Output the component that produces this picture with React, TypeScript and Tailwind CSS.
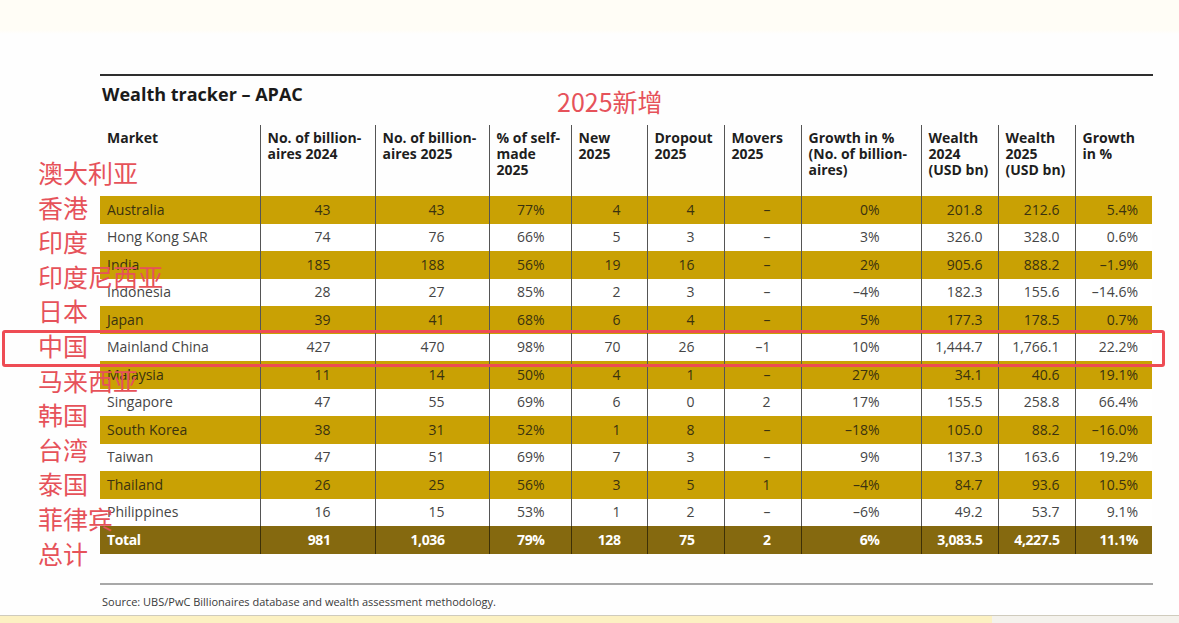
const rows: [string, ...string[]][] = [
  ['Australia', '43', '43', '77%', '4', '4', '–', '0%', '201.8', '212.6', '5.4%'],
  ['Hong Kong SAR', '74', '76', '66%', '5', '3', '–', '3%', '326.0', '328.0', '0.6%'],
  ['India', '185', '188', '56%', '19', '16', '–', '2%', '905.6', '888.2', '–1.9%'],
  ['Indonesia', '28', '27', '85%', '2', '3', '–', '–4%', '182.3', '155.6', '–14.6%'],
  ['Japan', '39', '41', '68%', '6', '4', '–', '5%', '177.3', '178.5', '0.7%'],
  ['Mainland China', '427', '470', '98%', '70', '26', '–1', '10%', '1,444.7', '1,766.1', '22.2%'],
  ['Malaysia', '11', '14', '50%', '4', '1', '–', '27%', '34.1', '40.6', '19.1%'],
  ['Singapore', '47', '55', '69%', '6', '0', '2', '17%', '155.5', '258.8', '66.4%'],
  ['South Korea', '38', '31', '52%', '1', '8', '–', '–18%', '105.0', '88.2', '–16.0%'],
  ['Taiwan', '47', '51', '69%', '7', '3', '–', '9%', '137.3', '163.6', '19.2%'],
  ['Thailand', '26', '25', '56%', '3', '5', '1', '–4%', '84.7', '93.6', '10.5%'],
  ['Philippines', '16', '15', '53%', '1', '2', '–', '–6%', '49.2', '53.7', '9.1%'],
];

const total = ['Total', '981', '1,036', '79%', '128', '75', '2', '6%', '3,083.5', '4,227.5', '11.1%'];

const headers = [
  ['Market'],
  ['No. of billion-', 'aires 2024'],
  ['No. of billion-', 'aires 2025'],
  ['% of self-', 'made', '2025'],
  ['New', '2025'],
  ['Dropout', '2025'],
  ['Movers', '2025'],
  ['Growth in %', '(No. of billion-', 'aires)'],
  ['Wealth', '2024', '(USD bn)'],
  ['Wealth', '2025', '(USD bn)'],
  ['Growth', 'in %'],
];

const widths = ['w-[160px]', 'w-[115px]', 'w-[114px]', 'w-[82px]', 'w-[76px]', 'w-[77px]', 'w-[77px]', 'w-[120px]', 'w-[77px]', 'w-[77px]', 'w-[77px]'];

// right padding for the number columns
const pads = ['', 'pr-[44px]', 'pr-[44px]', 'pr-[26px]', 'pr-[26px]', 'pr-[29px]', 'pr-[30px]', 'pr-[41px]', 'pr-[15px]', 'pr-[15px]', 'pr-[14px]'];

const notes = ['澳大利亚', '香港', '印度', '印度尼西亚', '日本', '中国', '马来西亚', '韩国', '台湾', '泰国', '菲律宾', '总计'];

export default function App() {
  return (
    <div className="relative w-[1179px] h-[623px] overflow-hidden bg-[linear-gradient(#fffdf6_0px,#fffdf6_30px,#fefefe_34px)] font-['Open_Sans',sans-serif]">
      <div className="pt-[74px] pl-[100px] w-[1153px]">
        <div className="border-t-2 border-[#2e2e2e]" />
        <h1 className="mt-[6px] text-[18px] leading-[24px] font-bold text-[#1a1a1a] pl-[2px]">Wealth tracker – APAC</h1>

        <table className="mt-[19px] table-fixed border-collapse w-[1052px]">
          <thead>
            <tr className="h-[71px] align-top">
              {headers.map((h, i) => (
                <th
                  key={i}
                  className={`${widths[i]} ${i > 0 ? 'border-l border-[#555]' : ''} pt-[5px] pl-[7px] text-left text-[14px] leading-[16px] font-bold text-[#1e1e1e]`}
                >
                  {h.map((l, j) => (
                    <div key={j} className="whitespace-nowrap">{l}</div>
                  ))}
                </th>
              ))}
            </tr>
          </thead>
          <tbody>
            {rows.map((r, ri) => (
              <tr key={ri} className={`h-[27.5px] ${ri % 2 === 0 ? 'bg-[#c9a104] text-[#3a3210]' : 'bg-white text-[#454545]'}`}>
                {r.map((c, ci) => (
                  <td
                    key={ci}
                    className={`${ci > 0 ? `border-l border-[#555] text-right ${pads[ci]}` : 'pl-[7px] text-left'} text-[14px] leading-[20px] whitespace-nowrap p-0`}
                  >
                    {c}
                  </td>
                ))}
              </tr>
            ))}
            <tr className="h-[27.5px] bg-[#85690f] text-white">
              {total.map((c, ci) => (
                <td
                  key={ci}
                  className={`${ci > 0 ? `border-l border-[#3d3006] text-right ${pads[ci]}` : 'pl-[7px] text-left'} text-[14px] leading-[20px] font-bold tracking-[-0.4px] whitespace-nowrap`}
                >
                  {c}
                </td>
              ))}
            </tr>
          </tbody>
        </table>

        <div className="mt-[29px] border-t-2 border-[#a8a8a8]" />
        <p className="mt-[9px] pl-[2px] text-[11px] leading-[16px] text-[#3a3a3a]">
          Source: UBS/PwC Billionaires database and wealth assessment methodology.
        </p>
      </div>

      {/* bottom strip */}
      <div className="absolute left-0 right-0 top-[615px] h-[8px] border-t border-[#cfcbbd] flex">
        <div className="w-[992px] bg-[#fcf1c2]" />
        <div className="flex-1 bg-[#f4f2ec]" />
      </div>

      {/* annotations */}
      <div className="absolute left-[557px] top-[84px] text-[25px] leading-[34px] text-[#e6525a] font-['Noto_Sans_CJK_SC',sans-serif]">
        2025新增
      </div>
      <div className="absolute left-[38px] top-[155px] text-[25px] leading-[34.6px] text-[#e6525a] font-['Noto_Sans_CJK_SC',sans-serif]">
        {notes.map((n) => (
          <div key={n} className="whitespace-nowrap">{n}</div>
        ))}
      </div>
      <div className="absolute left-[2px] top-[330px] w-[1163px] h-[37px] border-[3px] border-[#ee4c54] rounded-[3px]" />
    </div>
  );
}
